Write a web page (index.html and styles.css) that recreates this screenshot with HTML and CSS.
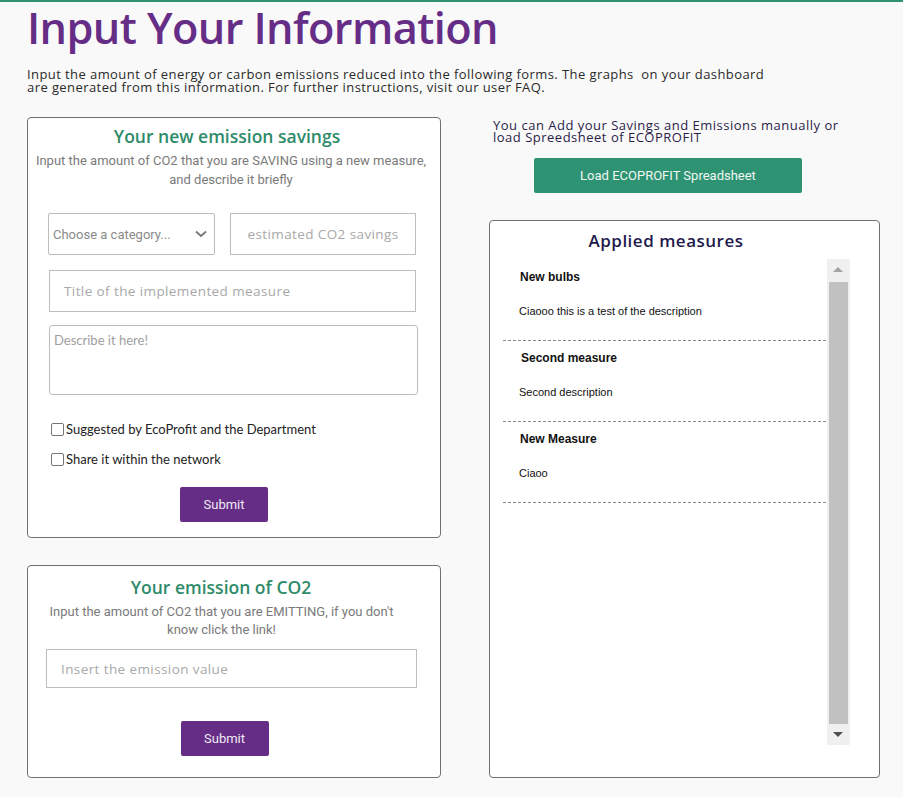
FILE: index.html
```html
<!DOCTYPE html>
<html lang="en">
<head>
<meta charset="utf-8">
<title>Input Your Information</title>
<link rel="stylesheet" href="styles.css">
</head>
<body>
<div class="topline"></div>
<main class="page">
  <h1 class="title">Input Your Information</h1>
  <p class="intro">Input the amount of energy or carbon emissions reduced into the following forms. The graphs&nbsp; on your dashboard<br>are generated from this information. For further instructions, visit our user FAQ.</p>

  <div class="columns">
    <div class="left">
      <section class="card card-savings">
        <h2 class="card-title">Your new emission savings</h2>
        <p class="card-desc">Input the amount of CO2 that you are SAVING using a new measure,<br>and describe it briefly</p>
        <div class="fields">
          <div class="row">
            <div class="select">
              <span class="select-text">Choose a category...</span>
              <svg class="chev" width="12" height="8" viewBox="0 0 12 8"><path d="M1 1.5 L6 6 L11 1.5" fill="none" stroke="#777" stroke-width="1.8"/></svg>
            </div>
            <div class="input input-est"><span class="ph">estimated CO2 savings</span></div>
          </div>
          <div class="input input-title"><span class="ph">Title of the implemented measure</span></div>
          <div class="textarea"><span class="ph-lato">Describe it here!</span></div>
          <label class="check"><span class="box"></span>Suggested by EcoProfit and the Department</label>
          <label class="check check-2"><span class="box"></span>Share it within the network</label>
          <div class="btn-wrap"><button class="btn-submit">Submit</button></div>
        </div>
      </section>

      <section class="card card-emission">
        <h2 class="card-title">Your emission of CO2</h2>
        <p class="card-desc desc-narrow">Input the amount of CO2 that you are EMITTING, if you don't<br>know click the link!</p>
        <div class="input input-em"><span class="ph">Insert the emission value</span></div>
        <div class="btn-wrap btn-wrap-2"><button class="btn-submit">Submit</button></div>
      </section>
    </div>

    <div class="right">
      <p class="right-text">You can Add your Savings and Emissions manually or<br>load Spreedsheet of ECOPROFIT</p>
      <button class="btn-load">Load ECOPROFIT Spreadsheet</button>
      <section class="card card-measures">
        <h2 class="measures-title">Applied measures</h2>
        <div class="list-wrap">
          <div class="list">
            <div class="item">
              <div class="item-title">New bulbs</div>
              <div class="item-desc">Ciaooo this is a test of the description</div>
            </div>
            <div class="item">
              <div class="item-title item-title-shift">Second measure</div>
              <div class="item-desc">Second description</div>
            </div>
            <div class="item">
              <div class="item-title">New Measure</div>
              <div class="item-desc">Ciaoo</div>
            </div>
          </div>
          <div class="scrollbar">
            <div class="arrow-up"></div>
            <div class="thumb"></div>
            <div class="arrow-down"></div>
          </div>
        </div>
      </section>
    </div>
  </div>
</main>
</body>
</html>
```

FILE: styles.css
```css
* { box-sizing: border-box; }
html, body { margin: 0; padding: 0; }
body {
  background: #f9f9f9;
  font-family: "Open Sans", sans-serif;
  color: #222;
}
.topline { height: 2px; background: #2e9372; }
.page { padding: 0 24px 0 27px; }
.title {
  margin: -2px 0 0;
  font-family: "Open Sans", sans-serif;
  font-weight: 600;
  font-size: 43.3px;
  line-height: 56px;
  color: #662d86;
  letter-spacing: -0.6px;
}
.intro {
  margin: 12px 0 0;
  font-family: "Open Sans", sans-serif;
  font-size: 13px;
  line-height: 13px;
  letter-spacing: 0.42px;
  color: #2a2a2a;
}
.columns {
  display: flex;
  gap: 48px;
  margin-top: 23px;
  align-items: flex-start;
}
.left { width: 414px; display: flex; flex-direction: column; gap: 27px; }
.right { width: 391px; }
.card {
  background: #fff;
  border: 1px solid #707070;
  border-radius: 4px;
}
.card-title {
  margin: 0;
  text-align: center;
  font-family: "Open Sans", sans-serif;
  font-weight: 600;
  font-size: 17.5px;
  line-height: 22px;
  color: #2e8b6a;
}
.card-savings { padding: 7px 0 15px; }
.card-savings .card-title { padding-right: 14px; }
.card-desc {
  margin: 4px 0 0;
  text-align: center;
  font-family: Roboto, sans-serif;
  font-size: 13px;
  line-height: 19px;
  color: #7a7a7a;
}
.card-savings .card-desc { padding-right: 6px; }
.fields { padding: 0 24px 0 20px; margin-top: 24px; }
.row { display: flex; gap: 15px; }
.select {
  width: 167px; height: 42px;
  border: 1px solid #bdbdbd;
  border-radius: 2px;
  display: flex; align-items: center; justify-content: space-between;
  padding: 0 7px 0 4px;
}
.select-text { font-family: Roboto, sans-serif; font-size: 13px; color: #8a8a8a; }
.input {
  height: 42px;
  border: 1px solid #bdbdbd;
  display: flex; align-items: center;
}
.input-est { width: 186px; justify-content: center; }
.ph { font-family: "Open Sans", sans-serif; font-size: 13.5px; color: #a8a8a8; letter-spacing: 0.4px; }
.input-title { margin-top: 15px; margin-left: 1px; padding-left: 14px; }
.textarea {
  margin-top: 13px; margin-left: 1px;
  width: 369px; height: 70px;
  border: 1px solid #bdbdbd; border-radius: 3px;
  padding: 2px 4px;
}
.ph-lato { font-family: Lato, sans-serif; font-size: 13px; color: #a0a0a0; }
.check {
  display: flex; align-items: center; gap: 2px;
  margin-top: 26px; margin-left: 3px;
  font-family: Lato, sans-serif; font-size: 13px; color: #222;
  height: 16px;
}
.check-2 { margin-top: 14px; }
.box {
  width: 13px; height: 13px;
  border: 1px solid #767676; border-radius: 2px; background: #fff;
}
.btn-wrap { display: flex; justify-content: center; margin-top: 20px; padding-right: 16px; }
.btn-submit {
  width: 88px; height: 35px;
  border: none; border-radius: 2px;
  background: #662d86; color: #f0eaf4;
  font-family: Roboto, sans-serif; font-size: 13px;
}
.card-emission { padding: 10px 0 21px; }
.card-emission .card-title { margin-right: 26px; }
.desc-narrow { margin-top: 5px; line-height: 18px; padding-right: 25px; }
.input-em { margin: 10px 23px 0 18px; height: 39px; padding-left: 14px; }
.btn-wrap-2 { margin-top: 33px; }
.card-emission .btn-wrap-2 { padding-right: 19px; }

.right-text {
  margin: 2px 0 0 4px;
  font-family: "Open Sans", sans-serif;
  font-size: 13px;
  line-height: 12px;
  letter-spacing: 0.5px;
  color: #2b1d4a;
}
.btn-load {
  display: block;
  margin: 15px 0 0 45px;
  width: 268px; height: 35px;
  border: none; border-radius: 2px;
  background: #2e9372; color: #f1f7f4;
  font-family: Roboto, sans-serif; font-size: 13px;
}
.card-measures { margin-top: 27px; height: 558px; padding: 8px 29px 0 13px; }
.measures-title {
  margin: 0;
  text-align: center;
  font-family: "Open Sans", sans-serif;
  font-weight: 600;
  font-size: 17px;
  line-height: 24px;
  letter-spacing: 0.5px;
  color: #1f1a4d;
  padding-right: 21px;
}
.list-wrap { display: flex; margin-top: 6px; height: 486px; }
.list { width: 323px; padding-top: 1px; }
.item {
  padding: 10px 0 22px 17px;
  border-bottom: 1px dashed #8a8a8a;
  font-family: "Liberation Sans", Arial, sans-serif;
  color: #111;
}
.item-title { font-size: 12px; font-weight: bold; line-height: 14px; }
.item-title-shift { padding-left: 1px; }
.item-desc { font-size: 11px; line-height: 14px; margin-top: 20px; margin-left: -1px; }
.scrollbar {
  margin-left: 1px;
  width: 23px; height: 486px;
  background: #f0f0f0;
  display: flex; flex-direction: column; align-items: center;
}
.arrow-up, .arrow-down { height: 23px; width: 100%; position: relative; }
.arrow-up::after {
  content: ""; position: absolute; left: 6px; top: 8px;
  border-left: 5px solid transparent; border-right: 5px solid transparent;
  border-bottom: 5px solid #a3a3a3;
}
.arrow-down { height: 21px; }
.arrow-down::after {
  content: ""; position: absolute; left: 6px; top: 8px;
  border-left: 5px solid transparent; border-right: 5px solid transparent;
  border-top: 5px solid #505050;
}
.thumb { width: 19px; flex: 1; background: #c1c1c1; }
```
